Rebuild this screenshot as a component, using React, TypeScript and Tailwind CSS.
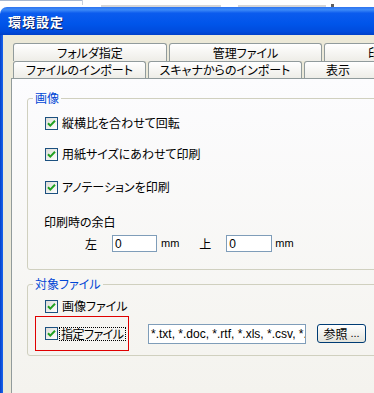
// App.tsx – 環境設定 dialog (Windows XP look)
import React from "react";

function Check() {
  return (
    <span className="flex h-[13px] w-[13px] shrink-0 items-center justify-center border border-[#1C5180] bg-gradient-to-br from-[#DCDCD7] to-white">
      <svg width="11" height="11" viewBox="0 0 11 11">
        <path d="M2 5.2 L4.3 7.6 L9 2.8" fill="none" stroke="#21A121" strokeWidth="2" />
      </svg>
    </span>
  );
}

function CheckRow({ label, className }: { label: string; className?: string }) {
  return (
    <div className={"flex h-[16px] items-center gap-[4px] " + (className ?? "")}>
      <Check />
      <span className="whitespace-nowrap leading-[16px]">{label}</span>
    </div>
  );
}

function Tab({ label, className }: { label: string; className: string }) {
  return (
    <div
      className={
        "flex shrink-0 items-center whitespace-nowrap rounded-t-[3px] border border-b-0 border-[#919B9C] bg-gradient-to-b from-white to-[#EEEDE7] leading-none " +
        className
      }
    >
      {label}
    </div>
  );
}

export default function App() {
  return (
    <div className="h-[393px] w-[374px] overflow-hidden bg-white font-['Noto_Sans_CJK_JP',sans-serif] text-[12px] text-black [font-feature-settings:'palt']">
      {/* stuff behind the window */}
      <div className="flex h-[7px] items-start">
        <div className="h-[1px] w-[82px] shrink-0 bg-[#A8B8D0]" />
        <div className="h-[5px] w-px shrink-0 bg-[#C8D0DC]" />
        <div className="ml-[18px] mt-[5px] h-[2px] w-[120px] shrink-0 bg-[#D6D6D6]" />
        <div className="ml-[17px] mt-[5px] h-[2px] w-[88px] shrink-0 bg-[#D6D6D6]" />
        <div className="ml-[5px] mt-[4px] h-[3px] w-[3px] shrink-0 bg-[#606060]" />
      </div>

      {/* window */}
      <div className="flex h-[386px] w-[470px] flex-col overflow-hidden rounded-tl-[7px]">
        <div className="flex h-[28px] shrink-0 items-center bg-[linear-gradient(to_bottom,#2D74F0_0%,#3D8AF7_10%,#0B5BEE_22%,#0055EA_60%,#004BDC_88%,#0040C8_100%)] pl-[8px]">
          <span className="text-[13px] font-bold leading-none tracking-[1px] text-white [text-shadow:1px_1px_0_#0A246A]">
            環境設定
          </span>
        </div>

        <div className="flex flex-1 bg-[#ECE9D8]">
          <div className="w-[3px] shrink-0 bg-gradient-to-r from-[#0842C8] to-[#1A66F0]" />
          <div className="w-[8px] shrink-0" />

          <div className="flex min-w-0 flex-1 flex-col pt-[8px]">
            {/* tabs */}
            <div className="flex h-[18px] gap-[2px] pl-[2px]">
              <Tab label="フォルダ指定" className="w-[154px] justify-center" />
              <Tab label="管理ファイル" className="w-[153px] justify-center" />
              <Tab label="印刷" className="w-[112px] pl-[43px]" />
            </div>
            <div className="flex h-[17px] gap-[2px] pl-[2px]">
              <Tab label="ファイルのインポート" className="w-[133px] justify-center" />
              <Tab label="スキャナからのインポート" className="w-[154px] justify-center" />
              <Tab label="表示" className="w-[100px] pl-[21px]" />
            </div>

            {/* page */}
            <div className="flex flex-1 flex-col border-l border-t border-[#919B9C] bg-gradient-to-b from-[#FCFCFE] to-[#F4F3EE] pl-[15px]">
              <fieldset className="mt-[12px] h-[179px] w-[400px] shrink-0 rounded-[3px] border border-[#D0D0BF]">
                <legend className="ml-[5px] px-[2px] leading-[14px] text-[#0046D5]">画像</legend>
                <div className="flex flex-col pl-[17px]">
                  <CheckRow label="縦横比を合わせて回転" className="mt-[10px]" />
                  <CheckRow label="用紙サイズにあわせて印刷" className="mt-[15px]" />
                  <CheckRow label="アノテーションを印刷" className="mt-[17px]" />
                  <div className="-ml-px mt-[19px] h-[16px] leading-[16px]">印刷時の余白</div>
                  <div className="mt-[5px] flex h-[17px] items-center">
                    <span className="ml-[40px]">左</span>
                    <div className="ml-[15px] flex h-[17px] w-[45px] shrink-0 items-center border border-[#7F9DB9] bg-white pl-[2px] font-['Liberation_Sans',sans-serif] text-[12px]">
                      0
                    </div>
                    <span className="ml-[4px] font-['Liberation_Sans',sans-serif] text-[11px]">mm</span>
                    <span className="ml-[20px]">上</span>
                    <div className="ml-[15px] flex h-[17px] w-[46px] shrink-0 items-center border border-[#7F9DB9] bg-white pl-[2px] font-['Liberation_Sans',sans-serif] text-[12px]">
                      0
                    </div>
                    <span className="ml-[3px] font-['Liberation_Sans',sans-serif] text-[11px]">mm</span>
                  </div>
                </div>
              </fieldset>

              <fieldset className="mt-[7px] h-[79px] w-[400px] shrink-0 rounded-[3px] border border-[#D0D0BF]">
                <legend className="ml-[5px] px-[2px] leading-[14px] text-[#0046D5]">対象ファイル</legend>
                <CheckRow label="画像ファイル" className="mt-[7px] pl-[17px]" />
                <div className="mt-[2px] flex items-center">
                  <div className="ml-[7px] flex h-[35px] w-[94px] shrink-0 items-center border border-[#E00000] pl-[9px]">
                    <Check />
                    <span className="ml-[1px] whitespace-nowrap border border-dotted border-black px-[1px] leading-[12px] tracking-[-0.5px]">
                      指定ファイル
                    </span>
                  </div>
                  <div className="ml-[19px] flex h-[20px] w-[158px] shrink-0 items-center overflow-hidden whitespace-nowrap border border-[#7F9DB9] bg-white pl-[2px] font-['Liberation_Sans',sans-serif] text-[12px]">
                    *.txt, *.doc, *.rtf, *.xls, *.csv, *.ppt
                  </div>
                  <button className="ml-[11px] flex h-[19px] w-[49px] shrink-0 items-center justify-center rounded-[3px] border border-[#003C74] bg-gradient-to-b from-white to-[#E3E3DB] leading-none">
                    参照<span className="ml-[3px] font-['Liberation_Sans',sans-serif] text-[11px]">...</span>
                  </button>
                </div>
              </fieldset>
            </div>
          </div>
        </div>
      </div>
    </div>
  );
}
